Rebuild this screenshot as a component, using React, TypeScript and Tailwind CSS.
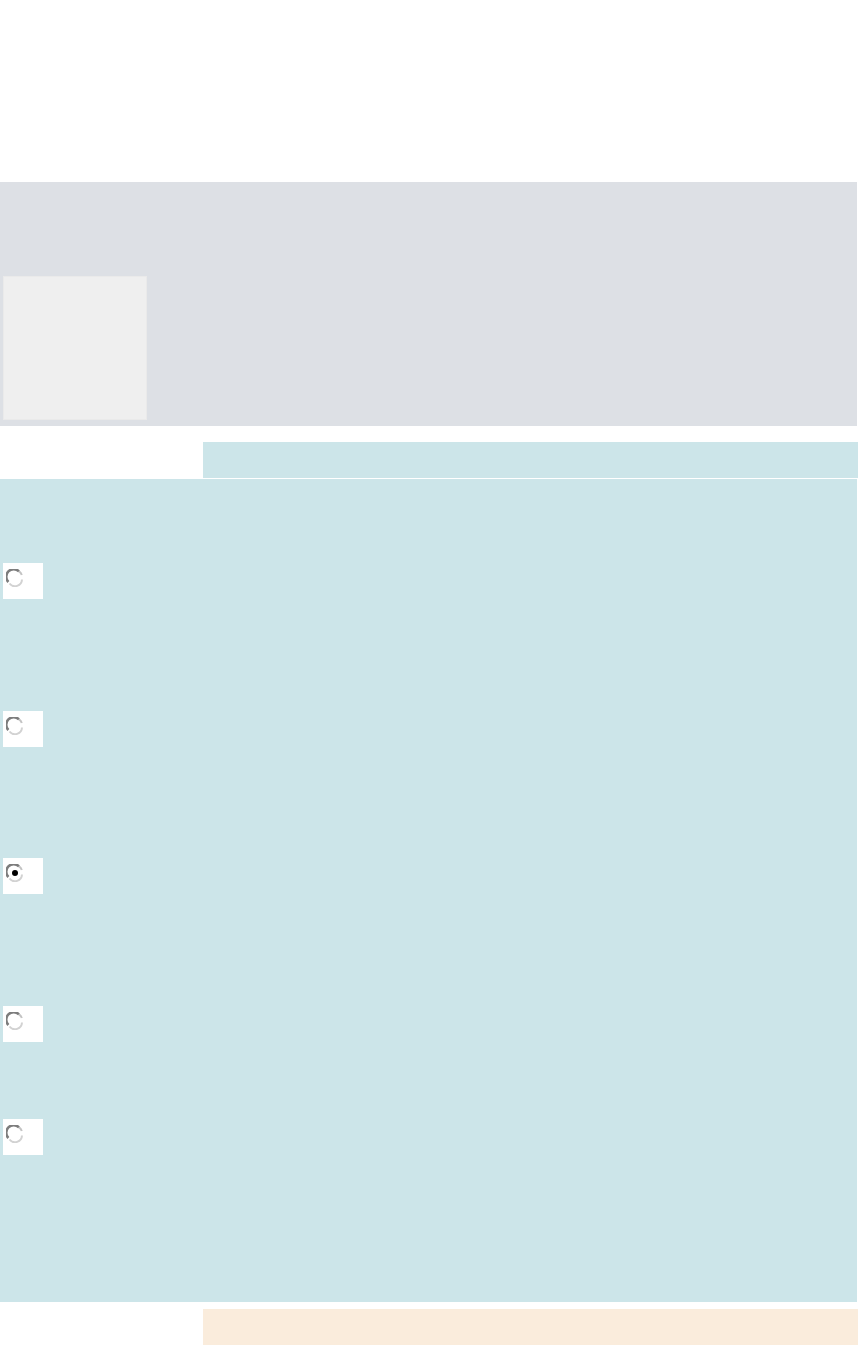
import React from 'react';

const Radio = ({checked = false}: {checked?: boolean}) => {
  return (
    <svg width="18" height="18" viewBox="0 0 18 18" className="block">
      <circle cx="9" cy="9" r="7.5" fill="#ffffff" />
      <path d="M2.4 13 A7 7 0 0 1 13 2.4" fill="none" stroke="#7d7d7d" strokeWidth="2.6" />
      <path d="M13 2.4 A7 7 0 0 1 15.8 6" fill="none" stroke="#c4c4c4" strokeWidth="2" />
      <path d="M16 10.5 A7 7 0 0 1 3.5 14.5" fill="none" stroke="#d2d2d2" strokeWidth="2" />
      {checked && <circle cx="9" cy="9" r="3" fill="#000000" />}
    </svg>
  );
};

const RadioBox = ({checked}: {checked?: boolean}) => {
  return (
    <div className="ml-[3px] h-[36px] w-[40px] bg-white pl-[3px] pt-[6px]">
      <Radio checked={checked} />
    </div>
  );
};

export default function App() {
  return (
    <main className="flex min-h-screen flex-col bg-white">
      {/* header space */}
      <div className="h-[182px]" />

      {/* gray band */}
      <div className="flex h-[244px] w-[857px] flex-col justify-end bg-[#dde0e5] pb-[6px]">
        <div className="ml-[3px] h-[144px] w-[144px] border border-[#eaeaea] bg-[#efefef]" />
      </div>

      <div className="flex pt-[16px]">
        <div className="w-[203px]" />
        <div className="h-[36px] flex-1 bg-[#cce5e9]" />
      </div>

      {/* options */}
      <div className="mt-px flex h-[823px] w-[857px] flex-col bg-[#cce5e9] pt-[84px]">
        <RadioBox />
        <div className="h-[112px]" />
        <RadioBox />
        <div className="h-[111px]" />
        <RadioBox checked />
        <div className="h-[112px]" />
        <RadioBox />
        <div className="h-[77px]" />
        <RadioBox />
      </div>

      <div className="flex pt-[7px]">
        <div className="w-[203px]" />
        <div className="h-[36px] flex-1 bg-[#faecdc]" />
      </div>
    </main>
  );
}
